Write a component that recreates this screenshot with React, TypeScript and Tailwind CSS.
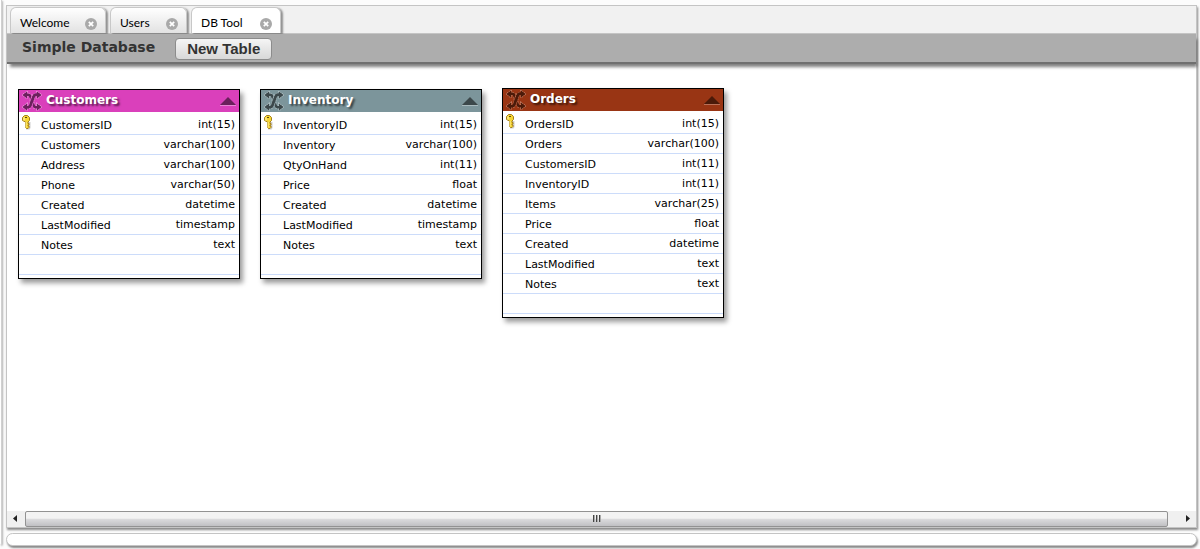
import { useState } from "react";

type Column = { name: string; type: string; primary?: boolean };
type Entity = {
  name: string;
  place: string;
  header: string;
  ink: string;
  edge: string;
  under: string;
  columns: Column[];
};

const entities: Entity[] = [
  {
    name: "Customers",
    place: "left-[11px] top-[25px]",
    header: "bg-[#da40bb]",
    ink: "text-[#6b205c]",
    edge: "stroke-[#efa3e0]",
    under: "stroke-[#da40bb]",
    columns: [
      { name: "CustomersID", type: "int(15)", primary: true },
      { name: "Customers", type: "varchar(100)" },
      { name: "Address", type: "varchar(100)" },
      { name: "Phone", type: "varchar(50)" },
      { name: "Created", type: "datetime" },
      { name: "LastModified", type: "timestamp" },
      { name: "Notes", type: "text" },
    ],
  },
  {
    name: "Inventory",
    place: "left-[253px] top-[25px]",
    header: "bg-[#7c959b]",
    ink: "text-[#3c484b]",
    edge: "stroke-[#bccacd]",
    under: "stroke-[#7c959b]",
    columns: [
      { name: "InventoryID", type: "int(15)", primary: true },
      { name: "Inventory", type: "varchar(100)" },
      { name: "QtyOnHand", type: "int(11)" },
      { name: "Price", type: "float" },
      { name: "Created", type: "datetime" },
      { name: "LastModified", type: "timestamp" },
      { name: "Notes", type: "text" },
    ],
  },
  {
    name: "Orders",
    place: "left-[495px] top-[24px]",
    header: "bg-[#993514]",
    ink: "text-[#4b1a09]",
    edge: "stroke-[#c98a74]",
    under: "stroke-[#993514]",
    columns: [
      { name: "OrdersID", type: "int(15)", primary: true },
      { name: "Orders", type: "varchar(100)" },
      { name: "CustomersID", type: "int(11)" },
      { name: "InventoryID", type: "int(11)" },
      { name: "Items", type: "varchar(25)" },
      { name: "Price", type: "float" },
      { name: "Created", type: "datetime" },
      { name: "LastModified", type: "text" },
      { name: "Notes", type: "text" },
    ],
  },
];

function CloseIcon() {
  return (
    <svg width="12" height="12" viewBox="0 0 12 12" aria-hidden="true">
      <circle cx="6" cy="6" r="6" fill="#a9a9a9" />
      <path d="M3.8 3.8l4.4 4.4M8.2 3.8L3.8 8.2" stroke="#fff" strokeWidth="1.7" />
    </svg>
  );
}

function KeyIcon() {
  return (
    <svg width="10" height="15" viewBox="0 0 10 15" role="img" aria-label="Primary key">
      <path d="M4 7h4.500v6l-1 1.500H4z" fill="#888" opacity=".4" />
      <path
        d="M2.500.5h3l2 2v3l-1.500 1.500v1.500h1v1.500h-1v1h1v1.500l-1 1h-1.500l-1-1V7L.5 5.500v-3z"
        fill="#f5d533"
        stroke="#a5801c"
        strokeWidth="1"
      />
      <path d="M2 2.500v3" stroke="#fff9b8" />
      <path d="M4 7v5.500" stroke="#fff09a" />
      <rect x="3" y="2" width="2" height="1" fill="#5d4a10" />
    </svg>
  );
}

function ShuffleIcon({ edge, under }: { edge: string; under: string }) {
  const heads = "M5 .5v7L.5 4zM15 .5v7L19.500 4zM5 12.500v7L.5 16zM15 12.500v7l4.500-3.500z";
  const back = "M4 4C9 2.500 8.500 7 10 10s1 7.500 6 6";
  const front = "M16 4c-5-1.500-4.500 3-6 6s-1 7.500-6 6";
  return (
    <svg width="20" height="20" viewBox="0 0 20 20" aria-hidden="true">
      <path d={heads} fill="none" className={edge} strokeWidth="1.500" strokeDasharray="1 1" />
      <path d={back} fill="none" className={edge} strokeWidth="4" strokeDasharray="1 1" />
      <path d={back} fill="none" stroke="currentColor" strokeWidth="2.500" />
      <path d={front} fill="none" className={under} strokeWidth="4.500" />
      <path d={front} fill="none" className={edge} strokeWidth="4" strokeDasharray="1 1" />
      <path d={front} fill="none" stroke="currentColor" strokeWidth="2.800" />
      <path d={heads} fill="currentColor" />
    </svg>
  );
}

function EntityCard({ entity }: { entity: Entity }) {
  const [open, setOpen] = useState(true);
  return (
    <section
      className={`absolute w-[222px] border border-black bg-white shadow-[3px_4px_5px_rgba(0,0,0,0.4)] ${entity.place}`}
    >
      <header className={`flex h-[22px] items-center pr-[3px] pl-[3px] ${entity.header} ${entity.ink}`}>
        <ShuffleIcon edge={entity.edge} under={entity.under} />
        <h2 className="ml-1 flex-1 pb-[2px] text-[12px] leading-4 font-bold text-white [text-shadow:2px_2px_2px_rgba(0,0,0,0.6)]">
          {entity.name}
        </h2>
        <button
          type="button"
          aria-label={`${open ? "Collapse" : "Expand"} ${entity.name}`}
          aria-expanded={open}
          onClick={() => setOpen(!open)}
        >
          <svg width="16" height="10" viewBox="0 0 16 10" aria-hidden="true">
            <path d="M8 1L0 9h16z" fill="currentColor" />
            <path d="M0 9.500h16" className={entity.edge} opacity=".7" />
          </svg>
        </button>
      </header>
      {open && (
        <table
          aria-label={entity.name}
          className="mb-[3px] w-full table-fixed border-separate border-spacing-0 text-[11px] leading-4"
        >
          <colgroup>
            <col className="w-[22px]" />
            <col />
            <col className="w-[86px]" />
          </colgroup>
          <tbody>
            {entity.columns.map((c, i) => (
              <tr key={c.name} className={i === 0 ? "h-[23px]" : "h-5"}>
                <td className="border-b border-[#ccdcfa] p-0 pl-[3px] align-top">
                  {c.primary && (
                    <div className="pt-[3px]">
                      <KeyIcon />
                    </div>
                  )}
                </td>
                <td className="border-b border-[#ccdcfa] p-0 align-bottom">{c.name}</td>
                <td className="border-b border-[#ccdcfa] p-0 pr-1 pb-px text-right align-bottom">{c.type}</td>
              </tr>
            ))}
            <tr className="h-5">
              <td colSpan={3} className="border-b border-[#ccdcfa] p-0" />
            </tr>
          </tbody>
        </table>
      )}
    </section>
  );
}

const tabs = [
  { label: "Welcome", width: "w-24" },
  { label: "Users", width: "w-[77px]" },
  { label: "DB Tool", width: "w-[90px]" },
];

export default function App() {
  const [active, setActive] = useState("DB Tool");
  return (
    <div className="flex min-h-screen bg-[#fcfcfc] font-['DejaVu_Sans',Verdana,sans-serif] text-black">
      <aside className="mb-1 w-[2px] rounded-br-sm border-r border-[#d0d0d0] bg-white shadow-[1px_1px_2px_rgba(0,0,0,0.3)]" />
      <div className="flex min-w-0 flex-1 flex-col gap-[5px] pt-[5px] pr-[3px] pb-[3px] pl-1">
        <main className="flex flex-1 flex-col border border-[#c4c4c4] bg-white shadow-[1px_2px_2px_rgba(0,0,0,0.45)]">
          <nav className="flex h-[28px] items-end gap-1 border-b border-[#c4c4c4] bg-[#f1f1f1] pl-[3px]">
            {tabs.map((t) => (
              <div
                key={t.label}
                className={`flex h-[26px] items-center justify-between rounded-t-md border border-b-0 border-[#c8c8c8] pt-1 pr-2 pl-[9px] shadow-[2px_1px_2px_rgba(0,0,0,0.4)] ${t.width} ${
                  active === t.label ? "bg-white" : "bg-linear-to-b from-white to-[#e2e2e2]"
                }`}
              >
                <button
                  type="button"
                  className="font-[Lato,sans-serif] text-[12px] leading-4"
                  onClick={() => setActive(t.label)}
                >
                  {t.label}
                </button>
                <button type="button" aria-label={`Close ${t.label}`} className="pt-[2px]">
                  <CloseIcon />
                </button>
              </div>
            ))}
          </nav>
          <div className="flex h-[30px] items-start border-b-2 border-[#6f6f6f] bg-[#adadad] pl-[15px] shadow-[2px_4px_3px_-1px_rgba(0,0,0,0.5)]">
            <h1 className="pt-[3px] text-[14px] leading-5 font-bold text-[#333]">Simple Database</h1>
            <button
              type="button"
              className="mt-1 ml-5 h-[22px] rounded-sm border border-[#8c8c8c] bg-linear-to-b from-[#f5f5f5] to-[#d8d8d8] px-[11px] font-['Liberation_Sans',Arial,sans-serif] text-[15px] leading-5 font-bold text-[#333]"
            >
              New Table
            </button>
          </div>
          <div className="relative min-h-[320px] flex-1">
            {entities.map((e) => (
              <EntityCard key={e.name} entity={e} />
            ))}
          </div>
          <div className="flex h-4 items-stretch bg-[#f0f0f0]">
            <button type="button" aria-label="Scroll left" className="flex w-[18px] items-center justify-center pr-[2px] pb-px">
              <svg width="4" height="7" viewBox="0 0 4 7">
                <path d="M4 0v7L0 3.500z" fill="#222" />
              </svg>
            </button>
            <div className="flex flex-1 items-center justify-center gap-px rounded-xs border border-[#929292] bg-linear-to-b from-[#f3f3f3] from-45% via-[#dcdcde] via-50% to-[#c0c0c3]">
              {[0, 1, 2].map((n) => (
                <span key={n} className="mb-[2px] h-[7px] w-[2px] border-l border-[#444] bg-[#aaa]" />
              ))}
            </div>
            <button type="button" aria-label="Scroll right" className="flex w-7 items-center justify-end pr-[6px] pb-px">
              <svg width="4" height="7" viewBox="0 0 4 7">
                <path d="M0 0v7l4-3.500z" fill="#222" />
              </svg>
            </button>
          </div>
        </main>
        <footer className="h-[13px] rounded-full border border-[#c4c4c4] bg-white shadow-[1px_2px_2px_rgba(0,0,0,0.45)]" />
      </div>
    </div>
  );
}
